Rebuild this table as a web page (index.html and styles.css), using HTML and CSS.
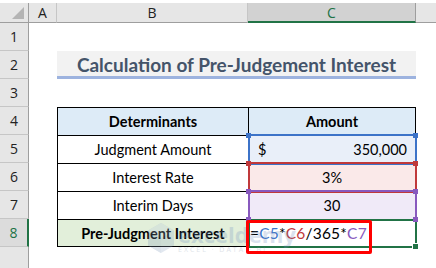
FILE: index.html
```html
<!DOCTYPE html>
<html>
<head>
<meta charset="utf-8">
<link rel="stylesheet" href="styles.css">
</head>
<body>
<div class="sheet">
  <div class="corner"><span class="tri"></span></div>
  <div class="colhead">A</div>
  <div class="colhead">B</div>
  <div class="colhead sel">C</div>
  <div class="colhead last"></div>

  <div class="rowhead">1</div><div class="cell"></div><div class="cell"></div><div class="cell"></div><div class="cell"></div>

  <div class="rowhead">2</div><div class="cell"></div>
  <div class="title">Calculation of Pre-Judgement Interest</div>
  <div class="cell"></div>

  <div class="rowhead">3</div><div class="cell"></div><div class="cell"></div><div class="cell"></div><div class="cell"></div>

  <div class="rowhead">4</div><div class="cell"></div>
  <div class="t th">Determinants</div>
  <div class="t th tc">Amount</div>
  <div class="cell"></div>

  <div class="rowhead">5</div><div class="cell"></div>
  <div class="t">Judgment Amount</div>
  <div class="t tc ref blue split"><span>$</span><span>350,000</span><i class="h tl"></i><i class="h tr"></i><i class="h bl"></i><i class="h br"></i></div>
  <div class="cell"></div>

  <div class="rowhead">6</div><div class="cell"></div>
  <div class="t">Interest Rate</div>
  <div class="t tc ref red">3%<i class="h tl"></i><i class="h tr"></i><i class="h bl"></i><i class="h br"></i></div>
  <div class="cell"></div>

  <div class="rowhead">7</div><div class="cell"></div>
  <div class="t">Interim Days</div>
  <div class="t tc ref purple">30<i class="h tl"></i><i class="h tr"></i><i class="h bl"></i><i class="h br"></i></div>
  <div class="cell"></div>

  <div class="rowhead sel">8</div><div class="cell"></div>
  <div class="t tb green-fill">Pre-Judgment Interest</div>
  <div class="t tc tb active"><span class="formula">=<span class="fb">C5</span>*<span class="fr">C6</span>/365*<span class="fp">C7</span></span><i class="fill"></i></div>
  <div class="cell"></div>

  <div class="rowhead last"></div><div class="cell"></div><div class="cell"></div><div class="cell"></div><div class="cell"></div>

  <div class="mark">
    <svg class="logo" width="30" height="32" viewBox="0 0 30 32"><path d="M15 1 L28 8.5 L28 23.5 L15 31 L2 23.5 L2 8.5 Z" fill="#8fa7c6"/><path d="M15 1 L28 8.5 L15 16 L2 8.5 Z" fill="#b4c6dc"/><path d="M15 16 L15 31 L2 23.5 L2 8.5 Z" fill="#7d96b8"/></svg>
    <div class="marktext"><div class="big">exceldemy</div><div class="small">EXCEL · DATA · BI</div></div>
  </div>
  <div class="annot"></div>
</div>
</body>
</html>
```

FILE: styles.css
```css
html, body {
  margin: 0;
  padding: 0;
  background: #ffffff;
}
body {
  padding-top: 3px;
  font-family: Lato, "Open Sans", sans-serif;
  font-size: 14.5px;
  color: #000;
}
.sheet {
  position: relative;
  display: grid;
  grid-template-columns: 29px 28px 191px 168px 20px;
  grid-template-rows: 20px repeat(8, 28px) 30px;
  width: 436px;
  height: 265px;
  overflow: hidden;
}
.corner {
  background: #e6e6e6;
  border-right: 1px solid #9e9e9e;
  border-bottom: 1px solid #9e9e9e;
  box-sizing: border-box;
  position: relative;
}
.tri {
  position: absolute;
  right: 4px;
  bottom: 3px;
  width: 0;
  height: 0;
  border-left: 12px solid transparent;
  border-bottom: 12px solid #b4b4b4;
}
.colhead {
  background: #e6e6e6;
  border-bottom: 1px solid #9e9e9e;
  border-right: 1px solid #c6c6c6;
  box-sizing: border-box;
  display: flex;
  align-items: center;
  justify-content: center;
  color: #222;
  font-family: "Open Sans", sans-serif;
  font-size: 14px;
}
.colhead.sel {
  background: #d2d2d2;
  color: #217346;
  border-bottom: 2px solid #217346;
  border-right: 1px solid #9e9e9e;
}
.colhead.last { border-right: none; }
.rowhead {
  background: #e6e6e6;
  border-right: 1px solid #9e9e9e;
  border-bottom: 1px solid #c6c6c6;
  box-sizing: border-box;
  display: flex;
  align-items: center;
  justify-content: center;
  color: #222;
  font-family: "Open Sans", sans-serif;
  font-size: 14px;
}
.rowhead.sel {
  background: #dcdcdc;
  color: #217346;
  border-right: 2px solid #217346;
}
.cell { background: #fff; }
.title {
  grid-column: 3 / 5;
  background: #f2f2f2;
  border-bottom: 3px solid #9db3df;
  box-sizing: border-box;
  display: flex;
  align-items: center;
  justify-content: center;
  font-weight: bold;
  font-size: 19px;
  color: #44546a;
  padding-top: 2px;
}
.t {
  position: relative;
  border-top: 1px solid #000;
  border-left: 1px solid #000;
  box-sizing: border-box;
  display: flex;
  align-items: center;
  justify-content: center;
  background: #fff;
}
.tc { border-right: 1px solid #000; }
.tb { border-bottom: 1px solid #000; }
.th {
  background: #ddebf7;
  font-weight: bold;
}
.green-fill {
  background: #e2efda;
  font-weight: bold;
}
.split {
  justify-content: space-between;
  padding: 0 8px 0 9px;
}
.ref::before {
  content: "";
  position: absolute;
  left: -1px;
  top: -2px;
  right: -2px;
  bottom: -2px;
  border: 2px solid var(--c);
  z-index: 2;
}
.blue { --c: #3c73c8; background: #e9eff9; }
.red { --c: #c0393b; background: #fae9e9; }
.purple { --c: #8859be; background: #f0eaf8; }
.h {
  position: absolute;
  width: 5px;
  height: 5px;
  background: var(--c);
  z-index: 3;
}
.tl { left: -3px; top: -3px; }
.tr { right: -3px; top: -3px; }
.bl { left: -3px; bottom: -3px; }
.br { right: -3px; bottom: -3px; }
.active {
  justify-content: flex-start;
  padding-left: 1px;
  background: #fff;
}
.active::before {
  content: "";
  position: absolute;
  left: -1px;
  top: -1px;
  right: -2px;
  bottom: -2px;
  border: 2px solid #217346;
  z-index: 2;
}
.fill {
  position: absolute;
  right: -4px;
  bottom: -4px;
  width: 5px;
  height: 5px;
  background: #217346;
  border: 1px solid #fff;
  z-index: 3;
}
.formula {
  position: relative;
  z-index: 4;
  font-size: 15.5px;
  letter-spacing: 0.2px;
}
.fb { color: #3c73c8; }
.fr { color: #c0393b; }
.fp { color: #8859be; }
.mark {
  position: absolute;
  left: 146px;
  top: 219px;
  display: flex;
  align-items: center;
  gap: 2px;
  opacity: 0.25;
  z-index: 5;
  pointer-events: none;
}
.marktext { display: flex; flex-direction: column; }
.big {
  font-family: "Open Sans", sans-serif;
  font-size: 22px;
  font-weight: bold;
  color: #6f8fbf;
  line-height: 22px;
}
.small {
  font-family: "Open Sans", sans-serif;
  font-size: 7px;
  letter-spacing: 2px;
  color: #7f8fa6;
  line-height: 9px;
}
.annot {
  position: absolute;
  left: 246px;
  top: 217px;
  width: 126px;
  height: 34px;
  border: 3px solid #ff0000;
  border-radius: 2px;
  box-sizing: border-box;
  z-index: 6;
}
```
